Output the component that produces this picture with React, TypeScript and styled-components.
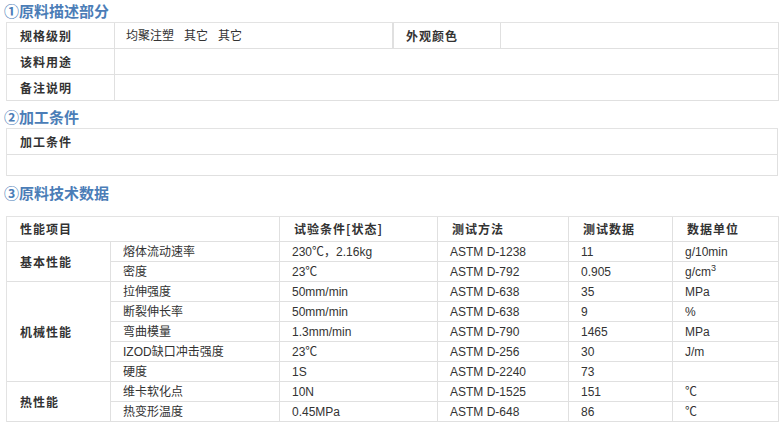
import React from "react";
import styled, { createGlobalStyle } from "styled-components";

const Global = createGlobalStyle`
  html, body { margin: 0; padding: 0; background: #fff; }
  body {
    font-family: "Liberation Sans", Arial, "Noto Sans CJK SC", sans-serif;
    font-size: 12px;
    color: #333;
  }
`;

const Page = styled.div`
  width: 784px;
  padding: 0 6px 0 6px;
  box-sizing: border-box;
`;

const Title = styled.h3<{ $gap?: number; $top?: number }>`
  margin: 0;
  padding: ${(p) => p.$top ?? 1}px 0 0 0;
  margin-left: -2px;
  height: ${(p) => p.$gap ?? 22}px;
  box-sizing: border-box;
  font-family: "Noto Sans CJK SC", sans-serif;
  font-size: 15px;
  line-height: 20px;
  font-weight: 700;
  color: #4b7db7;
  overflow: visible;
`;

const Table = styled.table`
  width: 772px;
  border-collapse: separate;
  border-spacing: 0;
  table-layout: fixed;
  border-top: 1px solid #e3e3e3;
  border-left: 1px solid #e3e3e3;
`;

const Cell = styled.td<{ $h?: number; $bold?: boolean; $pad?: number; $lb?: boolean }>`
  height: ${(p) => p.$h ?? 19}px;
  padding: 0 0 0 ${(p) => p.$pad ?? 12}px;
  border-right: 1px solid #e0e0e0;
  border-bottom: 1px solid #e0e0e0;
  ${(p) => (p.$lb ? "border-left: 1px solid #e0e0e0;" : "")}
  font-family: ${(p) =>
    p.$bold
      ? `"Noto Sans CJK SC", sans-serif`
      : `"Liberation Sans", Arial, "Noto Sans CJK SC", sans-serif`};
  font-weight: ${(p) => (p.$bold ? 700 : 400)};
  letter-spacing: ${(p) => (p.$bold ? "1px" : "0")};
  font-size: 12px;
  line-height: 16px;
  color: #333;
  white-space: nowrap;
  vertical-align: middle;
  text-align: left;
`;

const Sup = styled.sup`
  font-size: 9px;
  line-height: 0;
  vertical-align: 5px;
`;

type Row = { name: string; cond: string; method: string; data: string; unit: React.ReactNode };
type Group = { cat: string; rows: Row[] };

const groups: Group[] = [
  {
    cat: "基本性能",
    rows: [
      { name: "熔体流动速率", cond: "230℃，2.16kg", method: "ASTM D-1238", data: "11", unit: "g/10min" },
      { name: "密度", cond: "23℃", method: "ASTM D-792", data: "0.905", unit: <>g/cm<Sup>3</Sup></> },
    ],
  },
  {
    cat: "机械性能",
    rows: [
      { name: "拉伸强度", cond: "50mm/min", method: "ASTM D-638", data: "35", unit: "MPa" },
      { name: "断裂伸长率", cond: "50mm/min", method: "ASTM D-638", data: "9", unit: "%" },
      { name: "弯曲模量", cond: "1.3mm/min", method: "ASTM D-790", data: "1465", unit: "MPa" },
      { name: "IZOD缺口冲击强度", cond: "23℃", method: "ASTM D-256", data: "30", unit: "J/m" },
      { name: "硬度", cond: "1S", method: "ASTM D-2240", data: "73", unit: "" },
    ],
  },
  {
    cat: "热性能",
    rows: [
      { name: "维卡软化点", cond: "10N", method: "ASTM D-1525", data: "151", unit: "℃" },
      { name: "热变形温度", cond: "0.45MPa", method: "ASTM D-648", data: "86", unit: "℃" },
    ],
  },
];

export default function App() {
  return (
    <>
      <Global />
      <Page>
        <Title $gap={22}>①原料描述部分</Title>
        <Table>
          <colgroup>
            <col style={{ width: 108 }} />
            <col style={{ width: 278 }} />
            <col style={{ width: 108 }} />
            <col style={{ width: 278 }} />
          </colgroup>
          <tbody>
            <tr>
              <Cell $h={25} $bold $pad={13}>规格级别</Cell>
              <Cell $h={25} $pad={11}>均聚注塑&nbsp;&nbsp;&nbsp;其它&nbsp;&nbsp;&nbsp;其它</Cell>
              <Cell $h={25} $bold $pad={12} $lb>外观颜色</Cell>
              <Cell $h={25}></Cell>
            </tr>
            <tr>
              <Cell $h={25} $bold $pad={13}>该料用途</Cell>
              <Cell $h={25} colSpan={3}></Cell>
            </tr>
            <tr>
              <Cell $h={25} $bold $pad={13}>备注说明</Cell>
              <Cell $h={25} colSpan={3}></Cell>
            </tr>
          </tbody>
        </Table>
        <Title $gap={27} $top={6}>②加工条件</Title>
        <Table>
          <tbody>
            <tr>
              <Cell $h={25} $bold $pad={13}>加工条件</Cell>
            </tr>
            <tr>
              <Cell $h={20}></Cell>
            </tr>
          </tbody>
        </Table>
        <Title $gap={40} $top={7}>③原料技术数据</Title>
        <Table>
          <colgroup>
            <col style={{ width: 104 }} />
            <col style={{ width: 169 }} />
            <col style={{ width: 158 }} />
            <col style={{ width: 131 }} />
            <col style={{ width: 104 }} />
            <col style={{ width: 106 }} />
          </colgroup>
          <tbody>
            <tr>
              <Cell $h={24} $bold $pad={13} colSpan={2}>性能项目</Cell>
              <Cell $h={24} $bold $pad={14}>试验条件[状态]</Cell>
              <Cell $h={24} $bold $pad={14}>测试方法</Cell>
              <Cell $h={24} $bold $pad={14}>测试数据</Cell>
              <Cell $h={24} $bold $pad={14}>数据单位</Cell>
            </tr>
            {groups.map((g) =>
              g.rows.map((r, i) => (
                <tr key={g.cat + r.name}>
                  {i === 0 && (
                    <Cell $bold $pad={13} rowSpan={g.rows.length}>
                      {g.cat}
                    </Cell>
                  )}
                  <Cell>{r.name}</Cell>
                  <Cell>{r.cond}</Cell>
                  <Cell>{r.method}</Cell>
                  <Cell>{r.data}</Cell>
                  <Cell>{r.unit}</Cell>
                </tr>
              ))
            )}
          </tbody>
        </Table>
      </Page>
    </>
  );
}
